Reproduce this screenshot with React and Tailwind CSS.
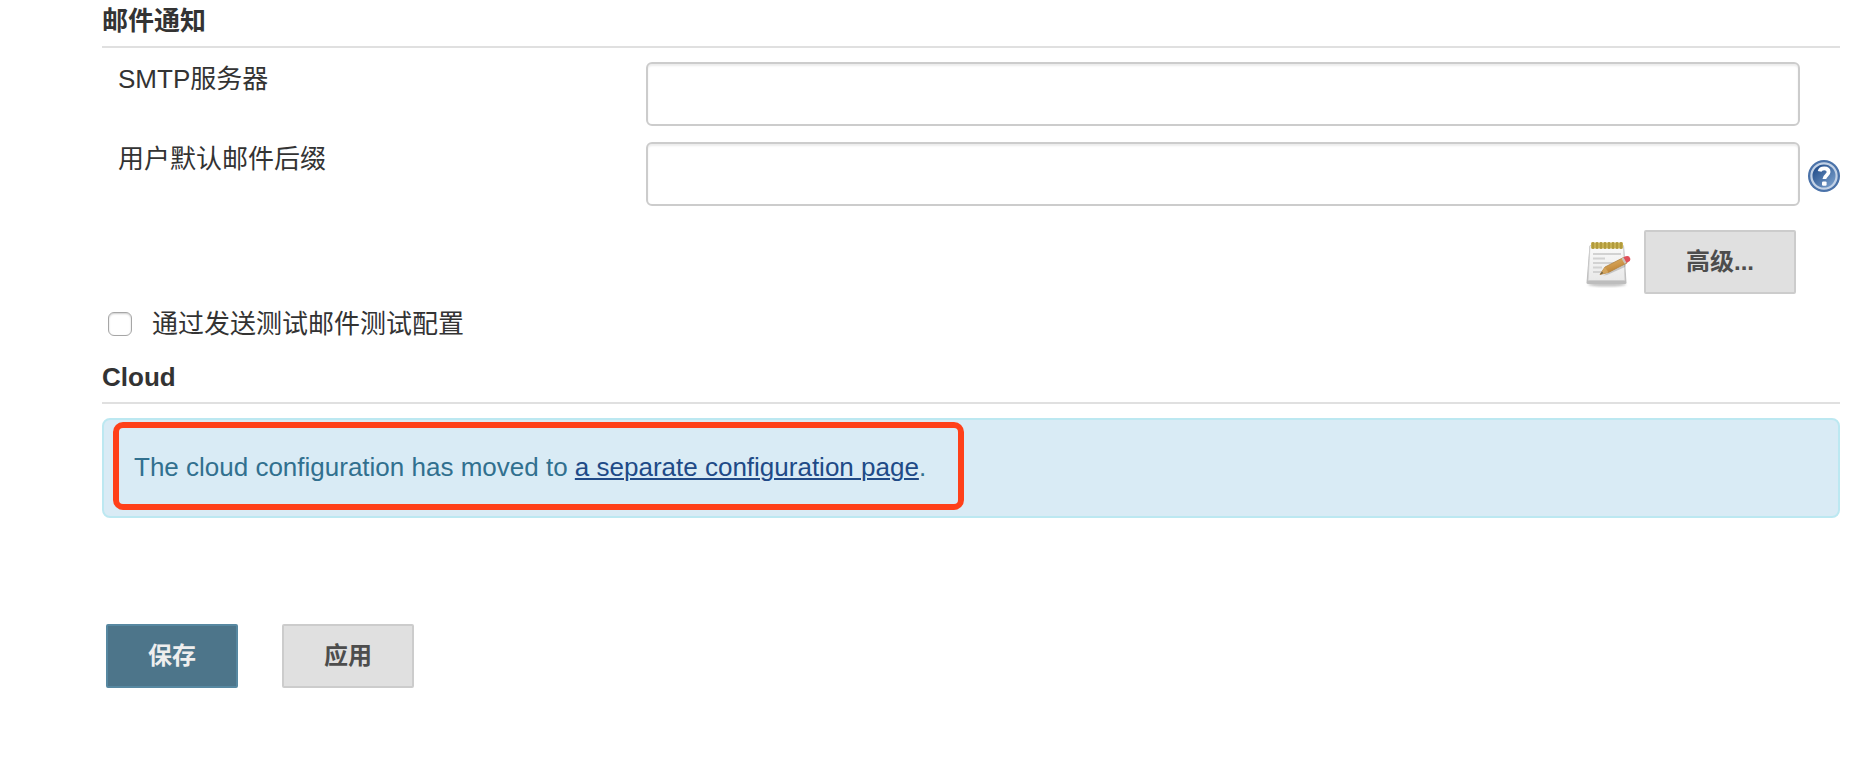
import React from "react";

function SectionTitle({ children }) {
  return (
    <h2 className="border-b-2 border-[#e0e0e0] pb-1 text-[26px] leading-[42px] font-bold text-[#333333]">
      {children}
    </h2>
  );
}

function TextRow({ id, label, help }) {
  return (
    <div className="grid grid-cols-[528px_1fr_32px] pl-4">
      <label htmlFor={id} className="text-[26px] leading-[34px]">
        {label}
      </label>
      <input
        id={id}
        type="text"
        className="mr-2 h-16 min-w-0 rounded-[6px] border-2 border-[#cccccc] bg-white px-3 shadow-[inset_0_2px_2px_rgba(0,0,0,0.075)] outline-none"
      />
      {help && (
        <a href="#help" aria-label="帮助" className="self-center pt-1">
          <HelpIcon />
        </a>
      )}
    </div>
  );
}

function HelpIcon() {
  return (
    <svg viewBox="0 0 32 32" className="block size-8" aria-hidden="true">
      <defs>
        <linearGradient id="helpFill" x1="0" y1="0" x2="1" y2="1">
          <stop offset="0.15" stopColor="#244f8c" />
          <stop offset="0.9" stopColor="#7ba0cc" />
        </linearGradient>
      </defs>
      <circle cx="16" cy="16" r="16" fill="#4a72a9" />
      <circle cx="16" cy="16" r="12.6" fill="url(#helpFill)" stroke="#c3d2e6" strokeWidth="2.2" />
      <path
        d="M11.600 11.400C12.200 9 14 8.400 16.200 8.400c2.700 0 4.400 1.300 4.400 3.600 0 3.300-4.200 3.400-4.200 7"
        fill="none"
        stroke="#ffffff"
        strokeWidth="3.8"
      />
      <rect x="14" y="21.400" width="4.600" height="4.400" rx="1.200" fill="#ffffff" />
    </svg>
  );
}

function NotepadIcon() {
  return (
    <svg viewBox="0 0 48 48" className="block size-12" aria-hidden="true">
      <defs>
        <linearGradient id="paper" x1="0" y1="0" x2="0" y2="1">
          <stop offset="0" stopColor="#fafafa" />
          <stop offset="1" stopColor="#e9e9e9" />
        </linearGradient>
        <linearGradient id="pencil" x1="0" y1="0" x2="0.500" y2="1">
          <stop offset="0" stopColor="#e9bf72" />
          <stop offset="1" stopColor="#b87a2c" />
        </linearGradient>
        <filter id="padShadow" x="-20%" y="-50%" width="140%" height="200%">
          <feGaussianBlur stdDeviation="1" />
        </filter>
      </defs>
      <ellipse cx="23" cy="44.500" rx="19" ry="2" fill="#999999" opacity="0.600" filter="url(#padShadow)" />
      <path d="M5.500 6h34.500l2.500 36.500q0 1.500-1.500 1.500H4q-1.500 0-1.500-1.500z" fill="#bdbdbd" />
      <path d="M6 5.500h33.500l1.500 35H4z" fill="url(#paper)" stroke="#cccccc" strokeWidth="0.800" />
      <path d="M9 14h28M9 18.500h12M9 23h22M9 27.500h9M9 32h9" stroke="#d2d2d2" strokeWidth="1.800" />
      <rect x="7" y="2.500" width="32" height="6" fill="#c6b050" />
      <path
        d="M9 2v7M13 2v7M17 2v7M21 2v7M25 2v7M29 2v7M33 2v7M37 2v7"
        stroke="#ac9538"
        strokeWidth="1.600"
      />
      <path d="M19 35.500L42 24l-1 3-18 8z" fill="#777777" opacity="0.350" />
      <path d="M16 34.500l5-7.500L39.500 17.500l3.500 5.500L24.500 32.500z" fill="url(#pencil)" stroke="#a97a38" strokeWidth="0.700" />
      <path d="M16 34.500l5-7.500 3.500 5.500z" fill="#d3a45c" />
      <path d="M16 34.500l2-3 1.300 1.800z" fill="#6f6040" />
      <path d="M37.500 18.500l2.500-1.200 3 5.200-2.500 1.300z" fill="#c9c3b8" />
      <path d="M39.500 17.200q3.500-1.800 5.700-.8 1.800 2 .6 4.600l-3.200 2z" fill="#e0505a" />
    </svg>
  );
}

const buttonBase =
  "h-16 rounded-[2px] border-2 px-10 text-[24px] leading-[36px] font-bold";

export default function App() {
  return (
    <main className="pr-[34px] pb-20 pl-[102px] font-['Liberation_Sans','Noto_Sans_CJK_SC',sans-serif] text-[#333333]">
      <form onSubmit={(e) => e.preventDefault()}>
        <section>
          <SectionTitle>邮件通知</SectionTitle>
          <div className="mt-[14px] flex flex-col gap-4">
            <TextRow id="smtp" label="SMTP服务器" />
            <TextRow id="suffix" label="用户默认邮件后缀" help />
          </div>
          <div className="mt-6 flex items-end justify-end gap-3 pr-11">
            <div className="pb-[6px]">
              <NotepadIcon />
            </div>
            <button type="button" className={`${buttonBase} border-[#cccccc] bg-[#e0e0e0] text-[#4d4d4d]`}>
              高级...
            </button>
          </div>
          <div className="mt-[10px] flex items-center gap-5 pl-[6px]">
            <input
              id="test-mail"
              type="checkbox"
              className="size-6 appearance-none rounded-[6px] border border-[#a6a6a6] bg-white shadow-[inset_0_1px_2px_rgba(0,0,0,0.2)] checked:bg-[#4b758b]"
            />
            <label htmlFor="test-mail" className="text-[26px] leading-[40px]">
              通过发送测试邮件测试配置
            </label>
          </div>
        </section>

        <section className="mt-3">
          <SectionTitle>Cloud</SectionTitle>
          <div className="mt-[14px] rounded-[8px] border-2 border-[#bce8f1] bg-[#d9ebf5] px-[30px] pt-[30px] pb-8 text-[26px] leading-[34px] text-[#31708f]">
            <p className="relative w-fit">
              The cloud configuration has moved to{" "}
              <a href="#cloud" className="text-[#204a87] underline decoration-2 underline-offset-2">
                a separate configuration page
              </a>
              .
              <span className="pointer-events-none absolute -top-7 -right-[38px] -bottom-[26px] -left-[21px] rounded-[10px] border-[6px] border-[#ff4019]" />
            </p>
          </div>
        </section>

        <div className="mt-[106px] flex gap-11 pl-1">
          <button type="submit" className={`${buttonBase} border-[#5788a1] bg-[#4d758a] text-[#eeeeee]`}>
            保存
          </button>
          <button type="button" className={`${buttonBase} border-[#cccccc] bg-[#e0e0e0] text-[#4d4d4d]`}>
            应用
          </button>
        </div>
      </form>
    </main>
  );
}
